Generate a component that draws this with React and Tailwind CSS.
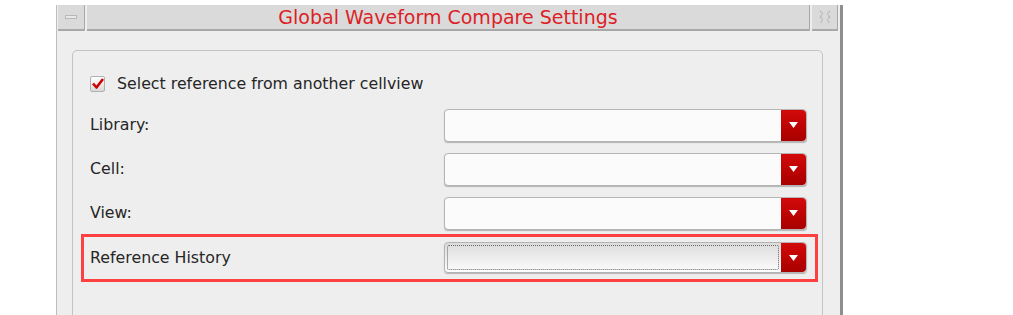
import React from "react";

const font = { fontFamily: '"DejaVu Sans", Verdana, sans-serif' };

function Dropdown({ focused }) {
  return (
    <div
      className={`flex w-[363px] rounded-[4px] border border-[#b4b4b4] shadow-[0_1px_1px_rgba(0,0,0,0.25)] ${
        focused ? "h-[31px] bg-gradient-to-b from-[#dcdcdc] to-[#fdfdfd]" : "h-[33px] bg-[#fbfbfb]"
      }`}
    >
      <div className="flex-1 p-[2px]">
        {focused && <div className="h-full rounded-[2px] border border-dotted border-[#666]" />}
      </div>
      <div className="flex w-[25px] items-center justify-center rounded-r-[4px] bg-gradient-to-b from-[#d40a0a] to-[#a80000]">
        <svg width="9" height="6" viewBox="0 0 9 6">
          <path d="M0 0h9L4.5 6z" fill="#fff" />
        </svg>
      </div>
    </div>
  );
}

function Row({ label, focused }) {
  return (
    <div className="flex items-center justify-between">
      <span className="text-[15.8px] text-[#262626]">{label}</span>
      <Dropdown focused={focused} />
    </div>
  );
}

function App() {
  return (
    <div className="h-[315px] w-[1013px] overflow-hidden bg-white pl-[56px] pt-[5px]" style={font}>
      <div className="flex h-[320px] w-[787px] flex-col border-l border-[#bdbdbd] border-r-[3px] border-r-[#8e8e8e] bg-[#eeeeee] pl-[1px] pr-[2px]">
        {/* title bar */}
        <div className="flex h-[26px] gap-[2px]">
          <div className="flex w-[27px] items-center justify-center border-b-2 border-r border-[#a8a8a8] bg-[#dadada]">
            <div className="h-[4px] w-[12px] border border-[#b8b8b8] bg-[#e8e8e8]" />
          </div>
          <div className="flex flex-1 items-center justify-center border-b-2 border-r border-[#a8a8a8] bg-[#dadada]">
            <span className="text-[19px] leading-none text-[#dc1f26]">Global Waveform Compare Settings</span>
          </div>
          <div className="flex w-[26px] items-center justify-center border-b-2 border-r border-[#a8a8a8] bg-[#dadada]">
            <svg width="14" height="16" viewBox="0 0 14 16" fill="none" stroke="#b0b0b0" strokeWidth="1.4" strokeDasharray="1.5 1.2">
              <path d="M2 2c3 2 3 4 0 6M12 2c-3 2-3 4 0 6M2 8c3 2 3 4 0 6M12 8c-3 2-3 4 0 6" />
            </svg>
          </div>
        </div>

        {/* group box */}
        <div className="ml-[14px] mr-[15px] mt-[19px] flex-1 rounded-[5px] border border-[#c4c4c4] pl-[17px] pr-[15px] pt-[21px]">
          <div className="flex items-center gap-[12px]">
            <div className="flex h-[16px] w-[15px] items-center justify-center rounded-[2px] border border-[#b0b0b0] bg-gradient-to-b from-[#ffffff] to-[#d8d8d8]">
              <svg width="12" height="11" viewBox="0 0 12 11">
                <path d="M1 5.5l3.5 4L11 1" fill="none" stroke="#d10000" strokeWidth="2.6" strokeLinejoin="round" />
              </svg>
            </div>
            <span className="text-[15.8px] text-[#262626]">Select reference from another cellview</span>
          </div>

          <div className="mt-[13px] flex flex-col gap-[11px]">
            <Row label="Library:" />
            <Row label="Cell:" />
            <Row label="View:" />
          </div>

          <div className="-ml-[9px] -mr-[11px] mt-[4px] flex h-[48px] items-center justify-between border-[3px] border-[#ff4040] pl-[6px] pr-[8px]">
            <span className="text-[15.8px] text-[#262626]">Reference History</span>
            <Dropdown focused />
          </div>
        </div>
      </div>
    </div>
  );
}

export default App;
